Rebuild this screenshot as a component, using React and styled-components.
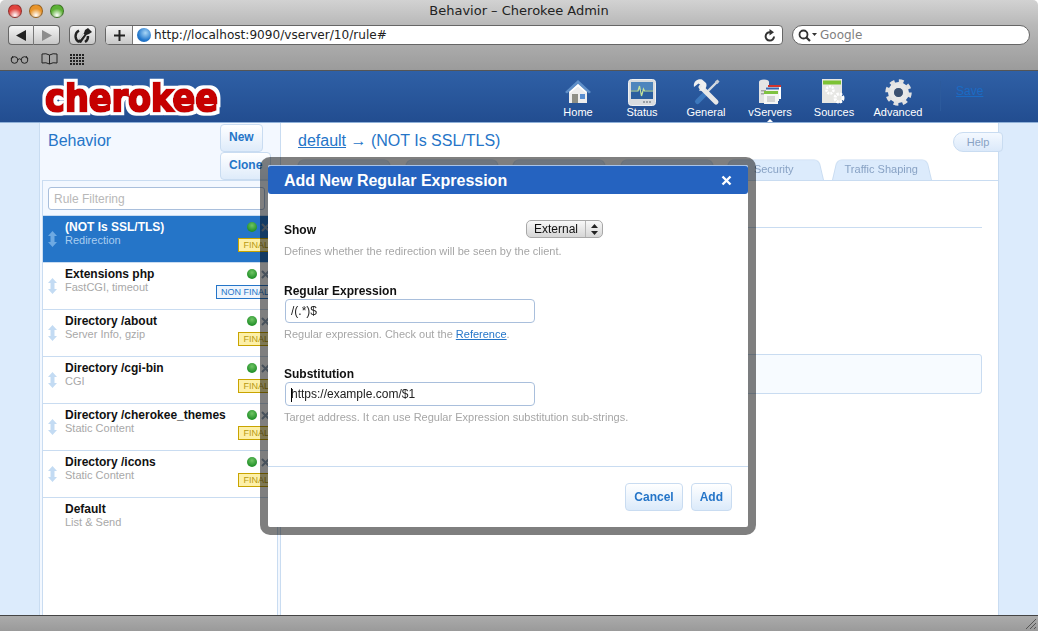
import React from "react";
import styled, { createGlobalStyle, css } from "styled-components";

const blue = "#2575c8";
const pale = "#dcebfc";
const line = "#c9dcf1";
const sans = `"Liberation Sans", Arial, sans-serif`;
const mac = `"DejaVu Sans", sans-serif`;

const NAV = [
  { label: "Home", icon: HomeIcon },
  { label: "Status", icon: StatusIcon },
  { label: "General", icon: ToolsIcon },
  { label: "vServers", icon: ServersIcon, current: true },
  { label: "Sources", icon: SourcesIcon },
  { label: "Advanced", icon: GearIcon },
];

const RULES = [
  { title: "(NOT Is SSL/TLS)", sub: "Redirection", badge: "FINAL", selected: true },
  { title: "Extensions php", sub: "FastCGI, timeout", badge: "NON FINAL" },
  { title: "Directory /about", sub: "Server Info, gzip", badge: "FINAL" },
  { title: "Directory /cgi-bin", sub: "CGI", badge: "FINAL" },
  { title: "Directory /cherokee_themes", sub: "Static Content", badge: "FINAL" },
  { title: "Directory /icons", sub: "Static Content", badge: "FINAL" },
  { title: "Default", sub: "List & Send" },
];

// the first four tabs sit behind the dialog, only their tops show
const TABS = ["", "", "", "", "Security", "Traffic Shaping"];

function HomeIcon() {
  return (
    <svg width="28" height="26" viewBox="0 0 28 26">
      <path d="M1 13 14 1l13 12-2 1.500L14 5 3 14.500z" fill="#5f8fc8" />
      <path d="M5 13 14 5l9 8v11H5z" fill="#eeeeee" />
      <path d="M5 13 14 5l9 8-1 1-8-6.500L6 14z" fill="#fff" />
      <rect x="8" y="15" width="6" height="9" fill="#8f8f86" />
      <rect x="16" y="15" width="5" height="5" fill="#5b8fd0" />
    </svg>
  );
}

function StatusIcon() {
  return (
    <svg width="28" height="27" viewBox="0 0 28 27">
      <rect x="0.500" y="0.500" width="27" height="26" rx="3" fill="#d9dcdf" stroke="#eef0f2" />
      <rect x="3" y="3" width="22" height="17" fill="#2b5f9f" />
      <rect x="3" y="3" width="22" height="8" fill="#4f86bd" />
      <path d="M3 12h7l1.500-5 2 10 2-7 1 2h8.500" fill="none" stroke="#c3e39a" strokeWidth="1.200" />
      <rect x="15" y="22" width="2" height="2" fill="#9aa0a6" />
      <rect x="18" y="22" width="2" height="2" fill="#9aa0a6" />
      <rect x="21" y="22" width="2" height="2" fill="#9aa0a6" />
    </svg>
  );
}

function ToolsIcon() {
  return (
    <svg width="27" height="27" viewBox="0 0 27 27">
      <path d="M24 3 14 13" stroke="#d5dbe2" strokeWidth="2.400" />
      <path d="M22 2.500l2.500-2 2 2-2 2.500z" fill="#c8ced6" />
      <path d="M13 14 4.500 22.500" stroke="#3d78bd" strokeWidth="5" strokeLinecap="round" />
      <path d="M8 8 23 23" stroke="#e8e8e8" strokeWidth="5" strokeLinecap="round" />
      <path d="M9 .5C4-.5 0 3 1 8l4.500-3.500L9 7l-3 4.500C11 13 15 8 13 4z" fill="#f0f0f0" />
    </svg>
  );
}

function ServersIcon() {
  return (
    <svg width="24" height="26" viewBox="0 0 24 26">
      <path d="M1 3q0-2.500 5-2.500t5 2.500v21H1z" fill="#e4e4e4" />
      <rect x="3" y="11" width="5" height="1.500" fill="#a6a6a6" />
      <rect x="3" y="14" width="5" height="1.500" fill="#a6a6a6" />
      <rect x="10" y="6" width="13" height="14" fill="#fff" />
      <rect x="10" y="6" width="13" height="2" fill="#d2332c" />
      <rect x="8" y="8" width="13" height="14" fill="#f2f2f2" />
      <rect x="8" y="8.500" width="13" height="2" fill="#3568b2" />
      <rect x="6" y="12" width="14" height="13" fill="#f6f6f6" />
      <rect x="6" y="12" width="14" height="3" fill="#7fc241" />
      <path d="M9 18h8M9 20h8M9 22h8" stroke="#b5b5b5" />
    </svg>
  );
}

function SourcesIcon() {
  return (
    <svg width="25" height="26" viewBox="0 0 25 26">
      <rect x="0" y="0" width="20" height="24" fill="#e7e7e4" />
      <rect x="1" y="1.500" width="18" height="4" fill="#7cc234" />
      <circle cx="8" cy="11" r="3.500" fill="none" stroke="#fff" strokeWidth="2.500" strokeDasharray="2 1" />
      <circle cx="17" cy="19" r="4" fill="none" stroke="#fff" strokeWidth="3" strokeDasharray="2.200 1" />
    </svg>
  );
}

function GearIcon() {
  return (
    <svg width="27" height="27" viewBox="0 0 27 27">
      <circle cx="13.500" cy="13.500" r="7.500" fill="none" stroke="#e8e8e8" strokeWidth="6" />
      <circle cx="13.500" cy="13.500" r="11" fill="none" stroke="#e2e2e2" strokeWidth="4.500" strokeDasharray="4.600 4.040" />
      <circle cx="13.500" cy="13.500" r="4.500" fill="#4a4a4a" opacity=".55" />
    </svg>
  );
}

function Logo() {
  return (
    <LogoSvg viewBox="0 0 180 44" aria-label="cherokee">
      <defs>
        <filter id="halo" x="-5%" y="-20%" width="110%" height="140%">
          <feMorphology in="SourceAlpha" operator="dilate" radius="3" result="wide" />
          <feFlood floodColor="#ffffff" />
          <feComposite in2="wide" operator="in" result="edge" />
          <feMerge>
            <feMergeNode in="edge" />
            <feMergeNode in="SourceGraphic" />
          </feMerge>
        </filter>
      </defs>
      <text
        x="5"
        y="35"
        textLength="173"
        lengthAdjust="spacingAndGlyphs"
        fontFamily="'DejaVu Sans', sans-serif"
        fontWeight="700"
        fontSize="38"
        fill="#c60006"
        stroke="#c60006"
        strokeWidth="2.400"
        filter="url(#halo)"
      >
        cherokee
      </text>
    </LogoSvg>
  );
}

function Arrows() {
  return (
    <DragHandle viewBox="0 0 9 16">
      <path d="M4.500 0 9 5H6.500v6H9l-4.500 5L0 11h2.500V5H0z" fill="currentColor" />
    </DragHandle>
  );
}

function Rule({ title, sub, badge, selected }) {
  return (
    <RuleRow $selected={selected}>
      {badge && <Arrows />}
      <RuleText>
        <RuleTitle>{title}</RuleTitle>
        <RuleSub $selected={selected}>{sub}</RuleSub>
      </RuleText>
      {badge && (
        <RuleSide>
          <RuleControls>
            <GreenDot />
            <svg width="9" height="9" viewBox="0 0 9 9">
              <path d="M1 1l7 7M8 1 1 8" stroke="#8fa3b8" strokeWidth="2" />
            </svg>
          </RuleControls>
          <Badge $nonFinal={badge !== "FINAL"}>{badge}</Badge>
        </RuleSide>
      )}
    </RuleRow>
  );
}

export default function App() {
  return (
    <Page>
      <GlobalStyle />
      <Chrome>
        <TitleBar>
          <Lights>
            <Light $c="#e0443e" />
            <Light $c="#e8942a" />
            <Light $c="#5cb135" />
          </Lights>
          Behavior – Cherokee Admin
        </TitleBar>
        <Toolbar>
          <Segments>
            <ToolBtn $w={26}>
              <svg width="10" height="11" viewBox="0 0 10 11"><path d="M0 5.500 10 0v11z" fill="#222" /></svg>
            </ToolBtn>
            <ToolBtn $w={26}>
              <svg width="10" height="11" viewBox="0 0 10 11"><path d="M10 5.500 0 0v11z" fill="#8c8c8c" /></svg>
            </ToolBtn>
          </Segments>
          <ToolBtn $w={27} $alone>
            <svg width="20" height="17" viewBox="0 0 20 17">
              <path d="M6 3.500A6.500 6.500 0 0 0 6 15M12 15a6.500 6.500 0 0 0 3-6" fill="none" stroke="#222" strokeWidth="2.400" />
              <path d="M4 15 11 6l1-3 3-2 4 4-3 2-2.500 1L8 16z" fill="#222" />
              <path d="M6.500 12.500 11 7" stroke="#e4e4e4" strokeWidth="1.200" />
            </svg>
          </ToolBtn>
          <Address>
            <AddBtn>
              <svg width="11" height="11" viewBox="0 0 11 11">
                <path d="M5.500 0v11M0 5.500h11" stroke="#222" strokeWidth="2" />
              </svg>
            </AddBtn>
            <Globe />
            <UrlText>http://localhost:9090/vserver/10/rule#</UrlText>
            <svg width="12" height="13" viewBox="0 0 12 13">
              <path d="M10 7.500A4.200 4.200 0 1 1 6 3.200" fill="none" stroke="#333" strokeWidth="2" />
              <path d="M5.500 0 10 3.200 5.500 6.400z" fill="#333" />
            </svg>
          </Address>
          <Search>
            <svg width="20" height="13" viewBox="0 0 20 13">
              <circle cx="5.500" cy="5.500" r="4" fill="none" stroke="#333" strokeWidth="1.800" />
              <path d="M8.500 8.500 12 12" stroke="#333" strokeWidth="2.200" />
              <path d="M14 4h5l-2.500 3z" fill="#333" />
            </svg>
            <span>Google</span>
          </Search>
        </Toolbar>
        <Bookmarks>
          <svg width="19" height="10" viewBox="0 0 19 10">
            <circle cx="4.500" cy="6" r="3.300" fill="none" stroke="#222" />
            <circle cx="14.500" cy="6" r="3.300" fill="none" stroke="#222" />
            <path d="M8 5.500q1.500-1.500 3 0M1 5l2-3M18 5l-2-3" fill="none" stroke="#222" />
          </svg>
          <svg width="17" height="12" viewBox="0 0 17 12">
            <path d="M8.500 2Q5 0 1 1v9q4-1 7.500 1 3.500-2 7.500-1V1q-4-1-7.500 1zm0 0v9" fill="none" stroke="#222" />
          </svg>
          <svg width="15" height="11" viewBox="0 0 15 11">
            <path d="M0 1h15M0 4h15M0 7h15M0 10h15" stroke="#222" strokeWidth="2" strokeDasharray="2 1" />
          </svg>
        </Bookmarks>
      </Chrome>

      <Header>
        <Logo />
        <Nav>
          {NAV.map(({ label, icon: Icon, current }) => (
            <NavItem key={label} $current={current}>
              <NavIcon><Icon /></NavIcon>
              {label}
            </NavItem>
          ))}
        </Nav>
        <SaveBox>
          <SaveLink href="#">Save</SaveLink>
        </SaveBox>
      </Header>

      <Body>
        <Sidebar>
          <SideHead>
            <SideTitle>Behavior</SideTitle>
            <SideButtons>
              <SideButton>New</SideButton>
              <SideButton>Clone</SideButton>
            </SideButtons>
          </SideHead>
          <RuleList>
            <FilterBar>
              <FilterInput placeholder="Rule Filtering" readOnly />
            </FilterBar>
            {RULES.map((r) => (
              <Rule key={r.title} {...r} />
            ))}
          </RuleList>
        </Sidebar>

        <Main>
          <MainHead>
            <Heading>
              <a href="#">default</a> → (NOT Is SSL/TLS)
            </Heading>
            <HelpButton>Help</HelpButton>
          </MainHead>
          <Tabs>
            {TABS.map((t, i) => (
              <Tab key={i}>{t}</Tab>
            ))}
          </Tabs>
          <Content>
            <ContentRule />
            <Notice />
          </Content>
        </Main>
      </Body>

      <StatusBar>
        <Grip viewBox="0 0 12 12">
          <path d="M1 11 11 1M5 11l6-6M9 11l2-2" stroke="#555" />
        </Grip>
      </StatusBar>

      <Dialog>
        <DialogTitle>
          Add New Regular Expression
          <svg width="11" height="11" viewBox="0 0 11 11">
            <path d="M1.500 1.500l8 8M9.500 1.500l-8 8" stroke="#fff" strokeWidth="2.400" />
          </svg>
        </DialogTitle>
        <DialogBody>
          <ShowRow>
            <FieldLabel>Show</FieldLabel>
            <Select>
              <SelectValue>External</SelectValue>
              <SelectArrows>
                <svg width="7" height="11" viewBox="0 0 7 11">
                  <path d="M3.500 0 7 4H0zM3.500 11 0 7h7z" fill="#222" />
                </svg>
              </SelectArrows>
            </Select>
          </ShowRow>
          <Hint>Defines whether the redirection will be seen by the client.</Hint>

          <FieldLabel $top>Regular Expression</FieldLabel>
          <TextField value="/(.*)$" readOnly />
          <Hint $tight>
            Regular expression. Check out the <a href="#">Reference</a>.
          </Hint>

          <FieldLabel $top>Substitution</FieldLabel>
          <CaretWrap>
            <TextField value="https://example.com/$1" readOnly />
          </CaretWrap>
          <Hint $tight>Target address. It can use Regular Expression substitution sub-strings.</Hint>
        </DialogBody>
        <DialogFooter>
          <FootButton>Cancel</FootButton>
          <FootButton>Add</FootButton>
        </DialogFooter>
      </Dialog>
    </Page>
  );
}

const GlobalStyle = createGlobalStyle`
  html, body { margin: 0; padding: 0; background: #fff; overflow: hidden; }
  * { box-sizing: border-box; }
`;

const Page = styled.div`
  position: relative;
  width: 1038px;
  height: 631px;
  overflow: hidden;
  display: flex;
  flex-direction: column;
  font-family: ${sans};
`;

const Chrome = styled.div`
  height: 71px;
  border-radius: 5px 5px 0 0;
  background: linear-gradient(#d2d2d2, #b9b9b9 35%, #9b9b9b);
  border-bottom: 1px solid #555;
  flex: none;
`;

const TitleBar = styled.div`
  position: relative;
  height: 24px;
  text-align: center;
  font: 13px/22px ${mac};
  color: #222;
`;

const Lights = styled.div`
  position: absolute;
  left: 8px;
  top: 4px;
  display: flex;
  gap: 7px;
`;

const Light = styled.span`
  width: 14px;
  height: 14px;
  border-radius: 50%;
  border: 1px solid rgba(0, 0, 0, 0.35);
  background: radial-gradient(circle at 50% 85%, #fff 0, ${(p) => p.$c} 55%, ${(p) => p.$c} 100%);
`;

const Toolbar = styled.div`
  height: 22px;
  padding: 1px 8px 0;
  display: flex;
  align-items: flex-start;
`;

const Segments = styled.div`
  display: flex;
  margin-right: 9px;
  & > div:first-child { border-right: 1px solid #777; border-radius: 4px 0 0 4px; }
  & > div:last-child { border-left: 0; border-radius: 0 4px 4px 0; }
`;

const ToolBtn = styled.div`
  width: ${(p) => p.$w}px;
  height: 20px;
  display: flex;
  align-items: center;
  justify-content: center;
  border: 1px solid #666;
  background: linear-gradient(#f4f4f4, #c8c8c8);
  ${(p) => p.$alone && css`
    border-radius: 4px;
    margin-right: 9px;
  `}
`;

const Address = styled.div`
  width: 678px;
  height: 20px;
  display: flex;
  align-items: center;
  padding-right: 6px;
  background: #fff;
  border: 1px solid #666;
  border-radius: 4px;
  overflow: hidden;
`;

const AddBtn = styled.div`
  width: 27px;
  height: 100%;
  flex: none;
  display: flex;
  align-items: center;
  justify-content: center;
  background: linear-gradient(#f4f4f4, #c8c8c8);
  border-right: 1px solid #777;
`;

const Globe = styled.span`
  width: 14px;
  height: 14px;
  margin: 0 3px 0 4px;
  flex: none;
  border-radius: 50%;
  background: radial-gradient(circle at 60% 35%, #a9d7f7, #2277cc 60%, #1a5ea8);
`;

const UrlText = styled.span`
  flex: 1;
  font: 12.1px ${mac};
  color: #222;
`;

const Search = styled.div`
  width: 238px;
  height: 20px;
  margin-left: 9px;
  padding-left: 5px;
  display: flex;
  align-items: center;
  gap: 2px;
  background: #fff;
  border: 1px solid #666;
  border-radius: 10px;
  font: 12px ${mac};
  color: #808080;
`;

const Bookmarks = styled.div`
  height: 24px;
  padding: 2px 0 0 10px;
  display: flex;
  align-items: center;
  gap: 12px;
`;

const Header = styled.div`
  height: 52px;
  flex: none;
  padding-left: 40px;
  display: flex;
  background: linear-gradient(#2f60a6, #224d90);
  border-bottom: 1px solid #8fb0d8;
`;

const LogoSvg = styled.svg`
  width: 180px;
  height: 44px;
  margin-top: 5px;
  flex: none;
  overflow: visible;
`;

const Nav = styled.div`
  margin-left: 326px;
  display: flex;
`;

const NavItem = styled.div`
  position: relative;
  width: 64px;
  text-align: center;
  font-size: 11px;
  line-height: 13px;
  color: #fff;
  padding-top: 7px;
  ${(p) => p.$current && css`
    &::after {
      content: "";
      position: absolute;
      left: 29px;
      bottom: 0;
      border: 3px solid transparent;
      border-top: 0;
      border-bottom-color: #fff;
    }
  `}
`;

const NavIcon = styled.div`
  height: 28px;
  display: flex;
  align-items: center;
  justify-content: center;
`;

const SaveBox = styled.div`
  margin: 10px 0 0 10px;
  height: 30px;
  padding-left: 15px;
  border-left: 1px solid #2c5a9c;
`;

const SaveLink = styled.a`
  font-size: 12px;
  line-height: 18px;
  color: #1b6bc4;
`;

const Body = styled.div`
  flex: 1;
  display: flex;
  padding: 0 39px;
  min-height: 0;
  background: ${pale};
`;

const Sidebar = styled.div`
  width: 241px;
  flex: none;
  padding: 0 2px;
  display: flex;
  flex-direction: column;
  background: #f3f8ff;
  border-left: 1px solid ${line};
`;

const SideHead = styled.div`
  height: 57px;
  flex: none;
  display: flex;
  margin-left: -2px;
`;

const SideTitle = styled.div`
  flex: 1;
  padding: 9px 0 0 8px;
  font-size: 16px;
  line-height: 18px;
  color: ${blue};
`;

const SideButtons = styled.div`
  width: 58px;
  flex: none;
  display: flex;
  flex-direction: column;
  align-items: flex-start;
  padding-top: 1px;
`;

const SideButton = styled.div`
  height: 28px;
  padding: 0 8px;
  font-size: 12px;
  font-weight: 700;
  line-height: 25px;
  color: ${blue};
  background: linear-gradient(#ffffff, #deebfa);
  border: 1px solid ${line};
  border-radius: 4px;
  &:first-child { width: 43px; padding: 0 0 0 8px; }
`;

const RuleList = styled.div`
  flex: 1;
  width: 236px;
  background: #fff;
  border: 1px solid ${line};
  border-bottom: 0;
`;

const FilterBar = styled.div`
  height: 35px;
  padding: 6px 12px 0 5px;
  background: #f3f8ff;
  border-bottom: 1px solid ${line};
`;

const FilterInput = styled.input`
  width: 100%;
  height: 23px;
  padding: 0 5px;
  font: 12px ${sans};
  background: #fff;
  border: 1px solid #a9bfdc;
  border-radius: 3px;
  outline: none;
  &::placeholder { color: #b8b8b8; opacity: 1; }
`;

const RuleRow = styled.div`
  position: relative;
  height: 47px;
  padding: 4px 3px 0 22px;
  display: flex;
  border-bottom: 1px solid ${line};
  background: ${(p) => (p.$selected ? blue : "#fff")};
  color: ${(p) => (p.$selected ? "#fff" : "#111")};
  &:last-child { border-bottom: 0; }
  ${(p) => p.$selected && css`
    svg:first-child { color: #6ea9e2; }
  `}
`;

const DragHandle = styled.svg`
  position: absolute;
  left: 5px;
  top: 15px;
  width: 9px;
  height: 16px;
  color: #c3dbf3;
`;

const RuleText = styled.div`
  flex: 1;
  min-width: 0;
`;

const RuleTitle = styled.div`
  font-size: 12px;
  font-weight: 700;
  line-height: 14px;
  white-space: nowrap;
`;

const RuleSub = styled.div`
  font-size: 11px;
  line-height: 13px;
  color: ${(p) => (p.$selected ? "#a9cdf0" : "#a8a8a8")};
`;

const RuleSide = styled.div`
  display: flex;
  flex-direction: column;
  align-items: flex-end;
  flex: none;
`;

const RuleControls = styled.div`
  height: 14px;
  display: flex;
  align-items: center;
  gap: 4px;
  padding-right: 4px;
`;

const GreenDot = styled.span`
  width: 10px;
  height: 10px;
  border-radius: 50%;
  background: radial-gradient(circle at 50% 35%, #6fc464, #23912a 70%);
`;

const Badge = styled.div`
  height: 14px;
  margin-top: 4px;
  padding: 0 4px;
  font-size: 9px;
  line-height: 12px;
  white-space: nowrap;
  border: 1px solid ${(p) => (p.$nonFinal ? "#2575c8" : "#c9a400")};
  color: ${(p) => (p.$nonFinal ? "#2575c8" : "#b89a10")};
  background: ${(p) => (p.$nonFinal ? "#eef5fd" : "#fdf0a8")};
`;

const Main = styled.div`
  flex: 1;
  min-width: 0;
  display: flex;
  flex-direction: column;
  background: #fff;
  border-left: 1px solid ${line};
  border-right: 1px solid ${line};
`;

const MainHead = styled.div`
  height: 34px;
  flex: none;
  padding-left: 17px;
  display: flex;
  align-items: flex-start;
  justify-content: space-between;
`;

const Heading = styled.div`
  padding-top: 8px;
  font-size: 16px;
  line-height: 19px;
  color: ${blue};
  a { color: ${blue}; }
`;

const HelpButton = styled.div`
  position: relative;
  width: 50px;
  height: 20px;
  margin: 9px -5px 0 0;
  text-align: center;
  font-size: 11px;
  line-height: 18px;
  color: #88a2c4;
  background: linear-gradient(#f4f9ff, #dbe9fa);
  border: 1px solid ${line};
  border-radius: 10px 4px 4px 10px;
`;

const Tabs = styled.div`
  height: 24px;
  flex: none;
  padding-left: 9px;
  display: flex;
  border-bottom: 1px solid ${line};
`;

const Tab = styled.div`
  position: relative;
  isolation: isolate;
  width: 107.5px;
  height: 23px;
  text-align: center;
  font-size: 11px;
  line-height: 25px;
  color: #88a2c4;
  &::before {
    content: "";
    position: absolute;
    inset: 0 4px;
    z-index: -1;
    background: ${pale};
    border: 1px solid ${line};
    border-bottom: 0;
    border-radius: 6px 6px 0 0;
    transform: perspective(30px) rotateX(8deg);
    transform-origin: bottom;
  }
`;

const Content = styled.div`
  padding: 0 16px 0 17px;
`;

const ContentRule = styled.div`
  height: 47px;
  border-bottom: 1px solid ${line};
`;

const Notice = styled.div`
  height: 40px;
  margin-top: 126px;
  background: #f7fbff;
  border: 1px solid ${line};
  border-radius: 3px;
`;

const StatusBar = styled.div`
  position: relative;
  height: 16px;
  flex: none;
  background: linear-gradient(#ababab, #9a9a9a);
  border-top: 1px solid #444;
`;

const Grip = styled.svg`
  position: absolute;
  right: 1px;
  bottom: 1px;
  width: 12px;
  height: 12px;
`;

const Dialog = styled.div`
  position: absolute;
  left: 260px;
  top: 157px;
  width: 496px;
  height: 378px;
  display: flex;
  flex-direction: column;
  background: #fff;
  background-clip: padding-box;
  border: 8px solid rgba(0, 0, 0, 0.5);
  border-radius: 10px;
`;

const DialogTitle = styled.div`
  height: 29px;
  flex: none;
  padding: 1px 16px 0;
  display: flex;
  align-items: center;
  justify-content: space-between;
  font-size: 16px;
  font-weight: 700;
  color: #fff;
  background: #2563c0;
  border-top: 1px solid #a8c4ea;
  border-radius: 3px;
`;

const DialogBody = styled.div`
  flex: 1;
  padding: 26px 16px 0;
`;

const ShowRow = styled.div`
  height: 18px;
  display: flex;
  align-items: center;
`;

const FieldLabel = styled.div`
  width: 242px;
  flex: none;
  padding-top: 2px;
  font-size: 12px;
  font-weight: 700;
  line-height: 14px;
  color: #111;
  ${(p) => p.$top && css`
    margin-top: 24px;
    width: auto;
  `}
`;

const Select = styled.div`
  width: 77px;
  height: 18px;
  display: flex;
  font-size: 12px;
  line-height: 16px;
  color: #111;
  background: linear-gradient(#f8f8f8, #d6d6d6);
  border: 1px solid #a8a8a8;
  border-radius: 5px;
`;

const SelectValue = styled.span`
  flex: 1;
  text-align: center;
`;

const SelectArrows = styled.span`
  width: 17px;
  display: flex;
  align-items: center;
  justify-content: center;
  border-left: 1px solid #b5b5b5;
`;

const Hint = styled.div`
  margin-top: ${(p) => (p.$tight ? 4 : 6)}px;
  font-size: 11px;
  line-height: 14px;
  color: #a6a6a6;
  a { color: ${blue}; }
`;

const TextField = styled.input`
  display: block;
  width: 250px;
  height: 24px;
  margin: 1px 0 0 1px;
  padding: 0 5px;
  font: 12px ${sans};
  color: #222;
  background: #fff;
  border: 1px solid #a9bfdc;
  border-radius: 4px;
  outline: none;
`;

const CaretWrap = styled.div`
  position: relative;
  &::before {
    content: "";
    position: absolute;
    left: 7px;
    top: 6px;
    width: 1px;
    height: 14px;
    background: #000;
  }
`;

const DialogFooter = styled.div`
  height: 61px;
  flex: none;
  padding: 16px 16px 0 0;
  display: flex;
  justify-content: flex-end;
  gap: 8px;
  border-top: 1px solid ${line};
`;

const FootButton = styled.div`
  height: 28px;
  padding: 0 8px;
  font-size: 12px;
  font-weight: 700;
  line-height: 26px;
  color: ${blue};
  background: linear-gradient(#ffffff, #dbeafa);
  border: 1px solid ${line};
  border-radius: 4px;
`;
